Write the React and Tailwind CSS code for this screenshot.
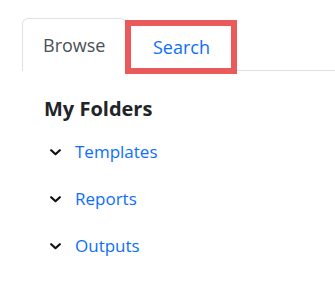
export default function App() {
  const items = ["Templates", "Reports", "Outputs"];
  return (
    <div className="w-[335px] h-[287px] bg-white overflow-hidden" style={{ fontFamily: '"Open Sans", "Noto Sans", sans-serif' }}>
      <div className="flex items-start pt-[18px] pl-[22px]">
        <div className="h-[53px] px-[20px] flex items-center border border-b-0 border-[#dee2e6] rounded-t-[6px] text-[18px] text-[#495057]">
          Browse
        </div>
        <div className="mt-[2px] -ml-px w-[112px] h-[54px] border-[6px] border-[#ea5a5a] flex items-center justify-center text-[18px] text-[#0d6efd]">
          Search
        </div>
        <div className="flex-1 h-[53px] border-b border-[#dee2e6]" />
      </div>
      <div className="pl-[44px] pt-[21px]">
        <div className="text-[20px] font-bold text-[#212529] leading-[28px]">My Folders</div>
        <ul className="mt-[16px] flex flex-col gap-[21px]">
          {items.map((t) => (
            <li key={t} className="flex items-center h-[26px]">
              <svg width="11" height="7" viewBox="0 0 11 7" className="ml-[6px] mr-[14px]">
                <path d="M1.2 1.2 L5.5 5.2 L9.8 1.2" fill="none" stroke="#111" strokeWidth="2.2" strokeLinecap="round" strokeLinejoin="round" />
              </svg>
              <span className="text-[17px] text-[#0d6efd]">{t}</span>
            </li>
          ))}
        </ul>
      </div>
    </div>
  );
}
